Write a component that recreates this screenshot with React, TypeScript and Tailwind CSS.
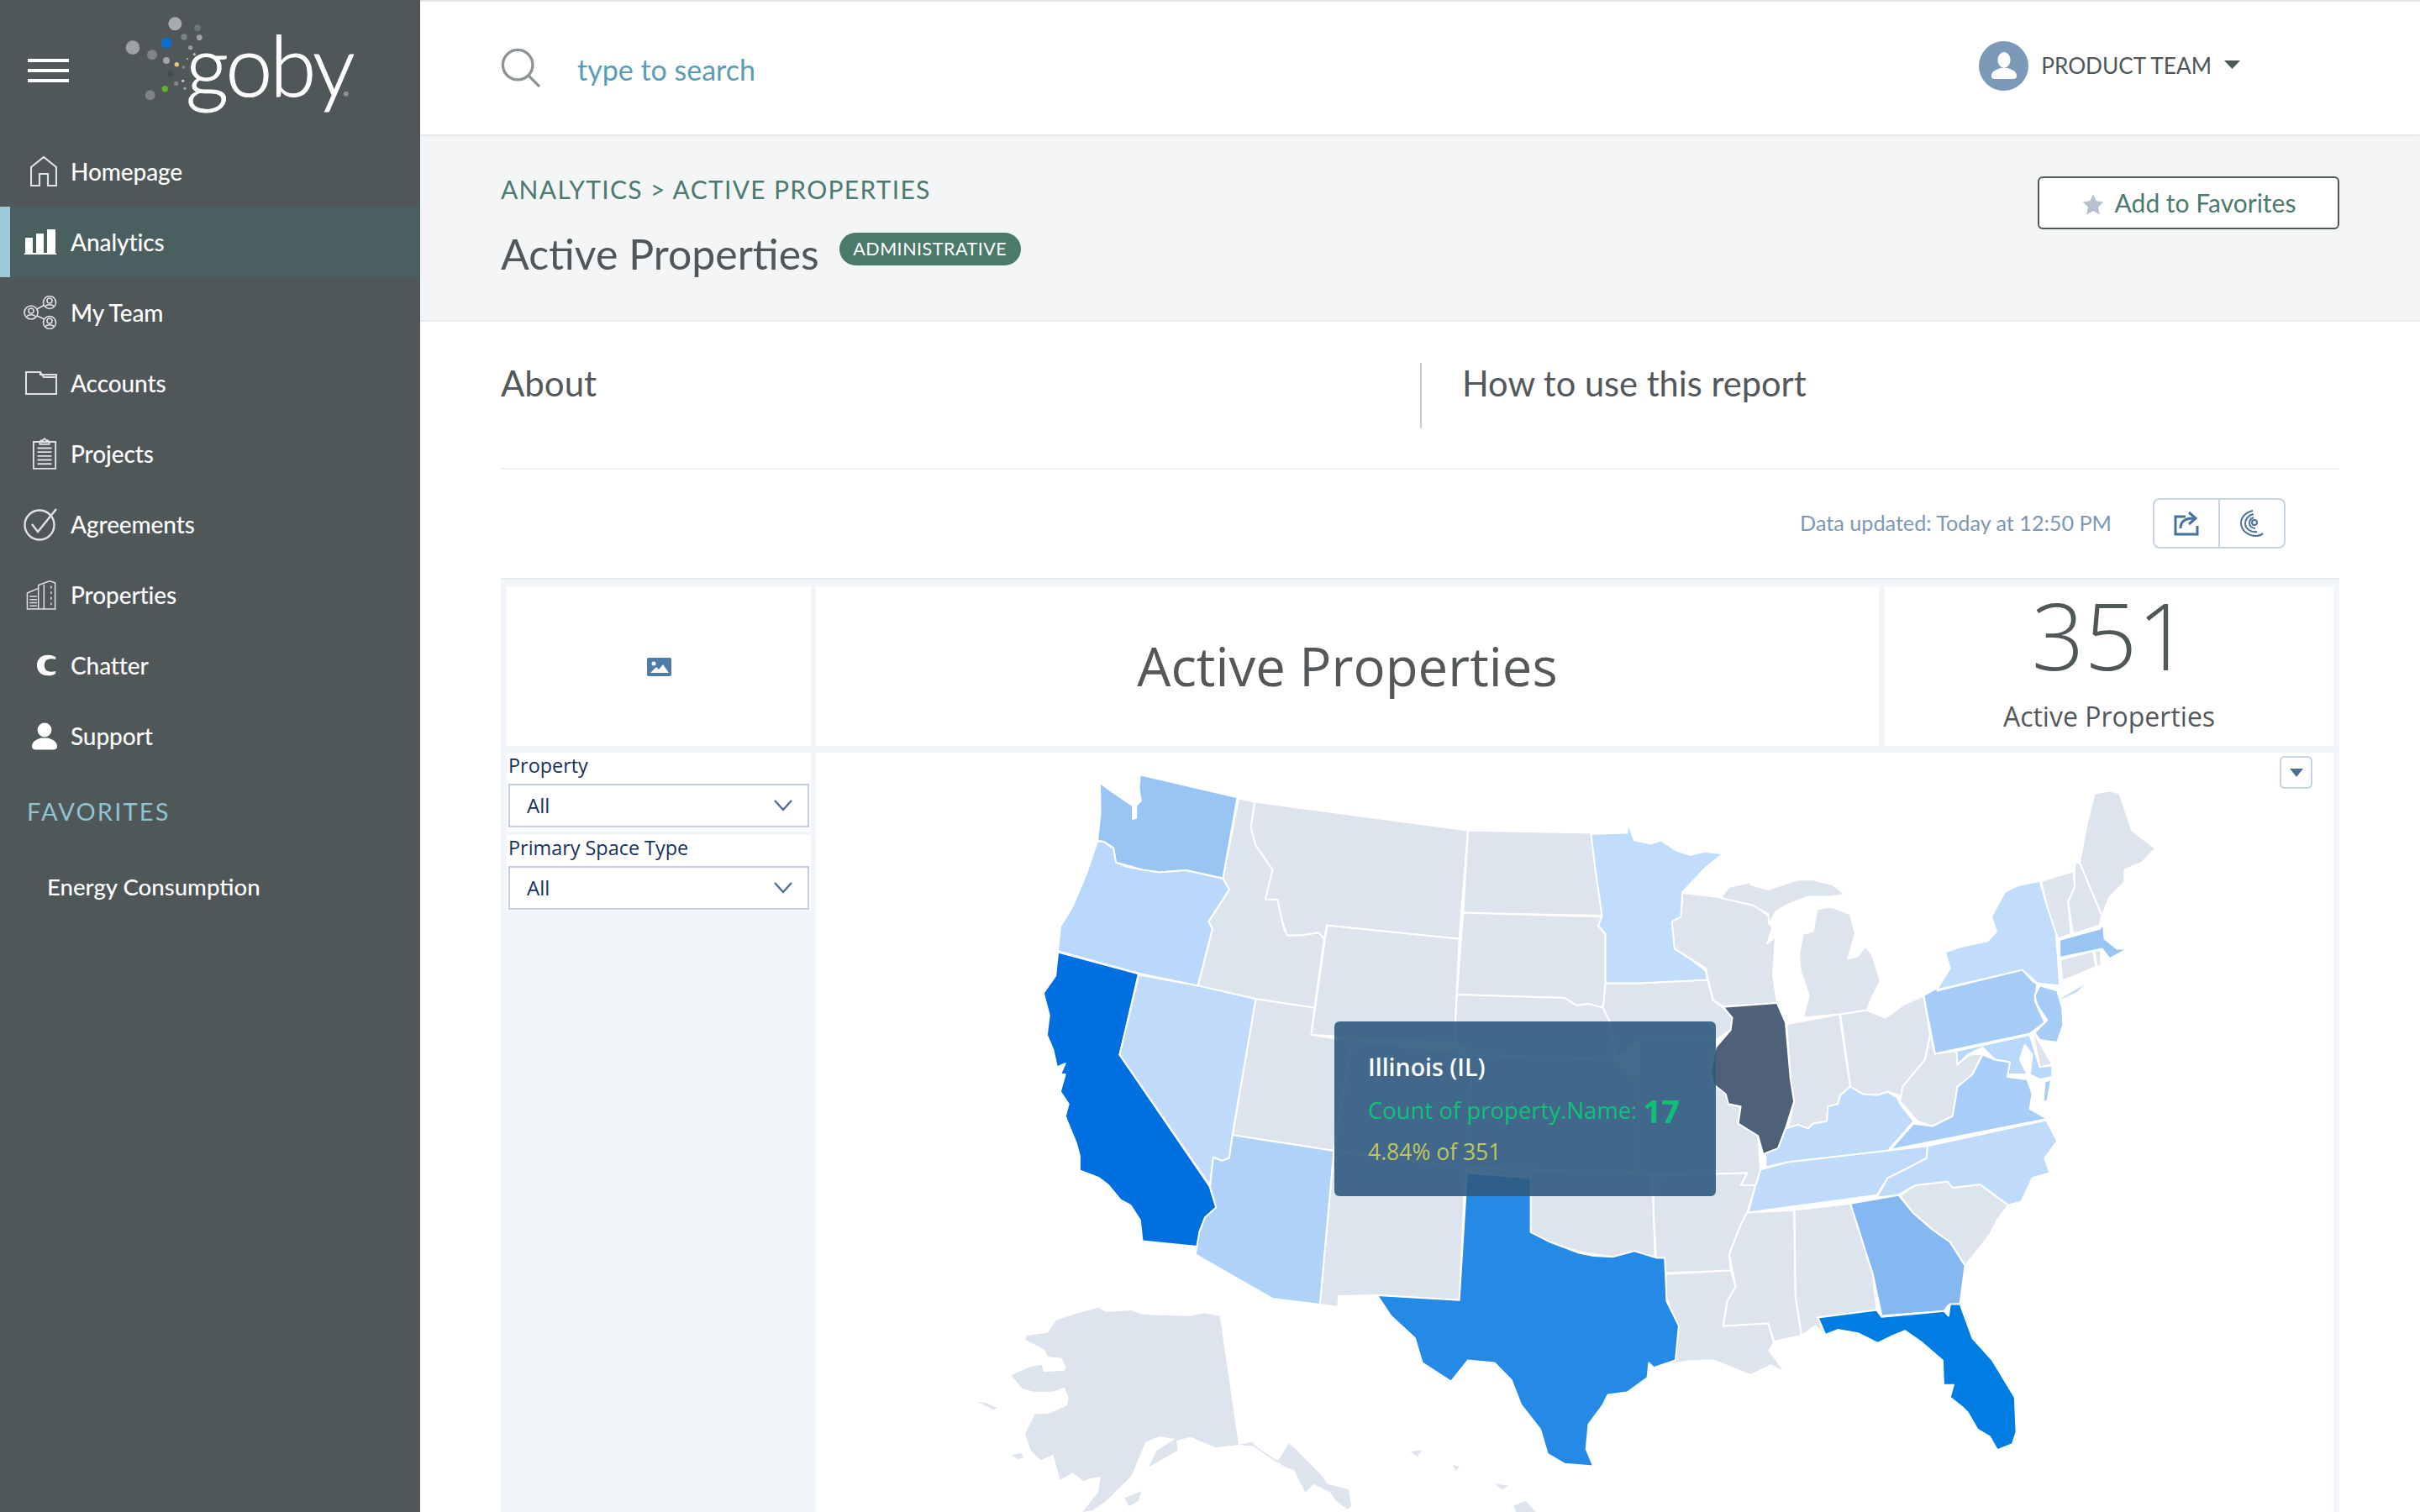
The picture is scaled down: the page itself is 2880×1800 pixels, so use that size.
import React from "react";

type Pt = [number, number];
const parse = (s: string, f: (x: number, y: number) => Pt) =>
  s.trim().split(/\s+/).map((t) => {
    const [x, y] = t.split(",").map(Number);
    return f(x, y).map((v) => v.toFixed(1)).join(",");
  }).join(" L");
const W = (s: string) => parse(s, (x, y) => [1150 + x / 1.742, 880 + y / 1.704]);
const E = (s: string) => parse(s, (x, y) => [1950 + x / 1.686, 880 + y / 1.704]);
const A = (s: string) => parse(s, (x, y) => [1150 + x / 3, 1500 + y / 3]);
const d = (...p: string[]) => "M" + p.join(" L") + "Z";

const G = "#dee4ee";
const states: [string, string][] = [
  // gray west
  [G, d(W("565,120 598,127 590,180 600,215 635,265 620,325 645,325 660,390 695,398 730,392 742,405 722,545 600,527 480,500 510,385 502,370 522,340 545,305 532,282"))],
  [G, d(W("598,127 1040,185 1022,405 748,378 742,405 730,392 695,398 665,398 655,370 645,325 620,325 635,265 600,215 590,180"))],
  [G, d(W("748,378 1022,405 1012,615 715,600"))],
  [G, d(W("600,527 722,545 715,600 800,612 762,835 552,803"))],
  [G, d(W("800,612 1050,640 1035,870 762,835"))],
  [G, d(W("762,835 1035,870 1022,1138 850,1128 772,1130 770,1152 733,1147"))],
  [G, d(W("1040,185 1295,190 1305,270 1318,358 1030,352"))],
  [G, d(W("1030,352 1318,360 1310,378 1325,395 1325,495 1325,520 1320,545 1290,537 1265,540 1240,525 1017,518"))],
  [G, d(W("1017,518 1240,525 1265,540 1290,537 1320,545 1335,575 1345,650 1050,640 1012,610"))],
  [G, d(W("1050,640 1345,650 1400,700 1425,880 1035,870"))],
  [G, d(W("1035,870 1422,880 1428,1050 1380,1040 1340,1050 1300,1045 1270,1040 1210,1020 1170,1000 1170,895"))],
  // gray central & east
  [G, d(W("1325,495"), E("0,495 138,488 150,530 170,545 188,565 185,590 155,610 0,610"), W("1345,650 1335,575 1320,545"))],
  [G, d(E("0,610 155,610 175,720 205,745 200,780 240,805 245,875 235,905 205,905 218,880 30,885 0,880"))],
  [G, d(E("30,885 218,880 205,905 235,905 218,960 205,985 182,1045 185,1078 55,1083 50,1055 35,1050 30,960"))],
  [G, d(E("55,1085 185,1078 195,1110 178,1140 170,1190 260,1183 272,1225 262,1240 295,1285 265,1270 225,1290 150,1260 100,1262 65,1268 80,1195 55,1130"))],
  [G, d(E("218,960 312,955 315,1130 327,1210 272,1222 260,1185 170,1190 178,1140 195,1110 182,1045 205,985"))],
  [G, d(E("313,955 425,942 470,1085 478,1158 360,1173 373,1208 355,1190 327,1210 315,1130"))],
  [G, d(E("88,312 160,320 235,338 262,360 268,385 258,415 275,400 270,480 278,535 170,542 150,530 140,490 135,465 72,425 67,370 85,358"))],
  [G, d(E("165,322 180,300 225,290 238,260 225,295 260,305 320,285 350,285 390,295 415,315 380,320 340,320 300,335 275,350 262,375 260,355 230,337"))],
  [G, d(E("330,565 342,520 325,470 322,435 330,395 350,390 358,345 385,340 425,355 435,395 420,445 440,440 455,420 470,440 485,490 470,520 458,550 403,558"))],
  [G, d(E("297,578 403,558 425,705 405,722 400,740 380,745 378,775 350,780 340,790 320,782 300,790 312,735 305,690"))],
  [G, d(E("405,558 458,550 495,565 530,540 572,520 585,600 575,650 550,680 530,725 500,715 480,722 450,720 425,705"))],
  [G, d(E("595,638 640,632 640,660 665,640 690,638 670,680 640,705 630,765 590,785 560,775 525,735 530,705 550,680 575,650 585,600"))],
  [G, d(E("525,925 555,905 620,897 630,910 685,903 742,945 720,975 705,1005 655,1068 625,1020 590,995 550,960"))],
  [G, d(E("808,288 872,268 875,300 862,330 868,395 842,405 820,345"))],
  [G, d(E("875,252 885,250 930,358 925,378 872,395 862,330 875,300"))],
  [G, d(E("885,250 900,170 915,110 945,105 965,110 990,185 1037,222 1010,250 975,265 975,290 945,320 930,358"))],
  [G, d(E("847,447 912,430 918,462 850,490"))],
  [G, d(E("915,430 928,428 928,458 920,462"))],
  [G, d(E("790,590 830,660 805,665"))],
  // coloured
  ["#99c5f5", d(W("360,72 562,118 532,282 455,266 400,270 365,265 330,255 310,250 305,220 285,208 272,205 278,150 277,88 300,105 330,125 345,135 345,162 352,160 352,135 362,125 358,100"))],
  ["#b9d8fb", d(W("272,207 285,208 305,222 310,250 330,258 365,265 400,270 455,266 532,283 545,305 522,340 502,370 510,385 480,500 357,475 190,430 195,380 220,340 250,270"))],
  ["#0070e0", d(W("190,432 357,476 318,640 505,908 510,925 518,950 495,970 483,1000 488,1030 365,1018 360,975 340,945 320,935 295,905 275,890 235,875 235,845 228,820 205,765 212,740 195,715 205,680 195,680 205,658 188,665 180,630 167,600 172,560 160,515 185,480"))],
  ["#bfdafa", d(W("358,478 480,500 600,527 552,800 545,850 530,855 512,848 505,905 318,640"))],
  ["#b0d2f8", d(W("552,803 762,835 733,1147 635,1135 475,1045 483,1000 495,970 518,950 505,908 512,848 530,855 545,850"))],
  ["#c2dcfb", d(W("1295,192 1370,190 1372,170 1385,205 1420,212 1440,205 1470,225 1500,235 1530,228"), E("170,232 135,260 88,310 85,360 67,370 72,425 110,450 135,470 138,488 0,495"), W("1325,495 1325,395 1310,378 1318,358 1305,270"))],
  ["#248ae6", d(W("1038,880 1170,890 1170,1000 1210,1020 1270,1042 1300,1048 1340,1050 1385,1038 1430,1052 1448,1052 1452,1140 1477,1190 1470,1260 1425,1275 1415,1265 1412,1295 1370,1325 1330,1330 1320,1350 1290,1390 1285,1440 1300,1475 1240,1470 1205,1450 1190,1400 1150,1350 1130,1300 1095,1265 1040,1260 1005,1303 945,1265 930,1215 880,1170 852,1128 1022,1138"))],
  ["#4f6179", d(E("170,543 278,535 295,575 305,690 312,735 295,790 280,830 250,842 240,805 200,780 205,745 180,740 175,720 150,700 145,670 155,625 185,590 188,565"))],
  ["#a5cbf7", d(E("572,520 598,505 600,510 770,468 790,490 800,497 795,530 815,575 785,597 595,638"))],
  ["#c2dcfb", d(E("600,505 625,465 615,432 650,420 700,410 718,390 708,360 735,310 760,297 805,288 820,340 838,395 845,500 800,495 770,468 600,508"))],
  ["#c2dcfb", d(E("845,525 905,490 880,515 850,528"))],
  ["#99c5f5", d(E("845,407 925,385 932,375 935,405 960,425 982,425 945,445 930,425 845,443"))],
  ["#a5cbf7", d(E("805,500 840,510 850,545 852,580 840,615 805,610 795,595 820,570 800,540 795,520"))],
  ["#b9d8fb", d(E("638,632 785,600 805,665 830,662 830,685 805,690 785,680 790,640 775,620 765,650 780,680 740,680 745,655 715,650 690,625 660,640 640,660"))],
  ["#a8cdf8", d(E("690,640 715,650 745,655 740,685 780,690 790,720 785,750 820,770 505,833 552,780 590,785 630,765 640,705 670,680"))],
  ["#a8cdf8", d(E("815,695 828,690 820,735 812,735"))],
  ["#bfdafa", d(E("425,705 450,720 480,722 500,715 520,728 525,740 552,775 500,835 300,858 255,868 255,840 280,830 295,790 320,782 340,790 350,780 378,775 380,745 400,740 405,722"))],
  ["#bfdafa", d(E("245,873 300,858 580,825 578,850 540,870 500,890 478,925 220,960 235,905"))],
  ["#bfdafa", d(E("580,825 818,773 840,815 815,850 825,880 790,890 768,938 742,945 685,903 630,910 620,897 555,905 520,925 478,930 500,890 540,870 578,850"))],
  ["#85b8f0", d(E("425,942 522,925 550,960 590,995 625,1020 655,1068 645,1145 622,1148 613,1160 488,1170 470,1085"))],
  ["#007de3", d(E("360,1173 478,1158 488,1172 613,1160 622,1170 625,1146 645,1146 670,1215 710,1260 755,1335 758,1405 750,1430 720,1442 705,1415 680,1400 660,1365 650,1355 625,1335 632,1310 612,1310 610,1260 570,1225 535,1200 510,1210 480,1225 440,1205 400,1198 375,1208"))],
];
const noStroke: string[] = [
  d(A("905,200 972,660 1020,650 1040,670 1100,710 1140,730 1105,720 1025,665 975,660 890,670 800,632 750,645 755,680 650,740 680,680 745,640 690,630 640,650 590,770 500,860 450,895 415,900 470,830 480,775 440,780 420,790 380,760 335,785 310,695 265,715 230,680 210,620 245,550 290,550 360,520 365,490 350,455 310,470 240,470 200,460 160,412 230,380 270,375 275,400 350,395 355,380 340,350 290,345 280,320 210,285 215,270 290,260 320,215 400,190 470,170 500,185 590,180 630,195 800,200 850,190")),
  d(A("1130,690 1150,655 1170,670 1270,770 1290,800 1365,820 1375,880 1360,890 1320,860 1300,830 1240,800 1210,830 1170,750 1140,740 1110,720")),
  d(A("35,508 70,510 110,528 95,535 60,515")),
  d(A("160,697 195,690 205,705 185,712")),
  d(A("565,850 625,825 615,860 580,880")),
  d(W("920,1445 945,1442 935,1455")),
  d(W("1008,1472 1022,1475 1015,1485")),
  d(W("1095,1510 1125,1515 1110,1522")),
  d(W("1135,1555 1160,1545 1180,1568 1140,1568")),
];

const dots: [number, number, number, string][] = [
  [625, 85, 24, "#a9acae"], [705, 100, 12, "#6f7678"], [712, 134, 10, "#a0a4a6"], [657, 132, 11, "#7b8183"],
  [594, 153, 19, "#0b6fcf"], [474, 170, 25, "#9ea2a4"], [543, 196, 18, "#7f8486"], [680, 170, 8, "#999c9e"],
  [694, 194, 5, "#bbbdbe"], [594, 216, 12, "#a0a4a6"], [631, 230, 8, "#e5cf6c"], [669, 210, 4, "#9a9d9f"],
  [655, 240, 5, "#8e9294"], [610, 263, 11, "#454c4e"], [653, 289, 5, "#cccccc"], [629, 298, 8, "#7f8486"],
  [589, 317, 11, "#5fb42a"], [660, 316, 5, "#a5a8a9"], [536, 340, 18, "#7d8284"], [1235, 335, 9, "#8a8f91"],
];

const ic = { fill: "none", stroke: "#dfe2e2", strokeWidth: 2 };
const icons: Record<string, React.ReactNode> = {
  home: <svg width="32" height="36" viewBox="0 0 32 36" {...ic}><path d="M1 35V13L16 1l15 12v22H21V21H11v14z" strokeWidth="2.2" /></svg>,
  bars: <svg width="40" height="30" viewBox="0 0 40 30"><path d="M0 30l2-2V10h9v18h4V5h9v23h4V0h10v28l2 2z" fill="#fff" /></svg>,
  team: <svg width="40" height="40" viewBox="0 0 40 40" {...ic} strokeWidth="1.6"><circle cx="9" cy="20" r="8" /><circle cx="31" cy="8" r="7.5" /><circle cx="31" cy="32" r="7.5" /><path d="M16 16l9-5M16 24l9 4" /><circle cx="9" cy="18" r="3" /><path d="M4 25c1-3 9-3 10 0" /><circle cx="31" cy="6" r="3" /><path d="M26 13c1-3 9-3 10 0" /><circle cx="31" cy="30" r="3" /><path d="M26 37c1-3 9-3 10 0" /></svg>,
  folder: <svg width="38" height="28" viewBox="0 0 38 28" {...ic}><path d="M1 1h17l4 6h15v20H1zM18 1v3h19v3" /></svg>,
  clip: <svg width="30" height="40" viewBox="0 0 32 40" {...ic}><path d="M2 5h28v34H2zM10 5l2-2h2l2-2 2 2h2l2 2v3H10zM7 13h18M7 18h18M7 23h18M7 28h18M7 33h18" /></svg>,
  agree: <svg width="40" height="40" viewBox="0 0 40 40" {...ic} strokeWidth="2.4"><circle cx="19" cy="21" r="17.5" /><path d="M10 20l7 9L39 2" /></svg>,
  prop: <svg width="37" height="36" viewBox="0 0 38 38" {...ic} strokeWidth="1.6"><path d="M1 37V17l14-6v26zM15 37V7l14-5 7 2v33zM1 37h36M4 21h9M4 25h9M4 29h9M4 33h9M31 8v3M31 15v3M31 22v3M31 29v3M22 6v31" /></svg>,
  chat: <svg width="24" height="26" viewBox="0 0 26 28"><path d="M24 3.5C20 0 13 0 7 2 2 5 0 9 0 14s2 9 7 12c6 2 13 2 17-1.500v-3c-5 1.500-11 1-13-2-2-3-2-8 0-11 2-3 8-3.500 13-2z" fill="#fff" /></svg>,
  user: <svg width="30" height="35" viewBox="0 0 32 36"><circle cx="16" cy="10" r="9" fill="#fff" /><path d="M0 31c0-8 8-9 11-11h10c3 2 11 3 11 11 0 3-3 4-5 4H5c-2 0-5-1-5-4z" fill="#fff" /></svg>,
};

const nav: [string, string, boolean?][] = [
  ["home", "Homepage"], ["bars", "Analytics", true], ["team", "My Team"], ["folder", "Accounts"],
  ["clip", "Projects"], ["agree", "Agreements"], ["prop", "Properties"], ["chat", "Chatter"], ["user", "Support"],
];

function Sidebar() {
  return (
    <aside className="w-[500px] shrink-0 bg-[#4f5759] text-white font-['Lato',sans-serif]">
      <div className="relative h-[162px] flex items-start">
        <div className="ml-[33px] mt-[70px] w-[49px] flex flex-col gap-[8px]">
          <div className="h-[4px] bg-white" /><div className="h-[4px] bg-white" /><div className="h-[4px] bg-white" />
        </div>
        <svg className="absolute left-0 top-0" width="500" height="162" viewBox="0 0 1500 486">
          {dots.map(([x, y, r, c], i) => <circle key={i} cx={x} cy={y} r={r} fill={c} />)}
        </svg>
        <span className="absolute left-[221px] top-[16px] text-[100px] leading-[120px] font-light tracking-[-3px] [-webkit-text-stroke:1px_white]">goby</span>
      </div>
      {nav.map(([icon, label, active]) => (
        <div key={label} className={`relative h-[84px] flex items-center ${active ? "bg-[#4c5f60]" : ""}`}>
          {active && <div className="absolute left-0 top-0 bottom-0 w-[12px] bg-[#9cc9d8]" />}
          <div className="ml-[20px] w-[48px] h-[40px] flex items-center justify-end shrink-0">{icons[icon]}</div>
          <span className="ml-[16px] text-[28px] tracking-[-0.1px] font-medium">{label}</span>
        </div>
      ))}
      <div className="ml-[32px] mt-[24px] text-[29px] leading-[48px] tracking-[2.2px] text-[#8fc3d3]">FAVORITES</div>
      <div className="ml-[56px] mt-[48px] text-[27.6px] leading-[36px] font-medium">Energy Consumption</div>
    </aside>
  );
}

function Select({ label, cls }: { label: string; cls: string }) {
  return (
    <div className={`bg-white px-[2px] ${cls}`}>
      <div className="text-[23.4px] leading-[30px] text-[#16325c] h-[37px]">{label}</div>
      <div className="h-[52px] border-2 border-[#c3cfdc] bg-white flex items-center justify-between pl-[20px] pr-[18px] text-[24px] text-[#16325c]">
        <span>All</span>
        <svg width="22" height="14" viewBox="0 0 22 14" fill="none" stroke="#4f6f95" strokeWidth="2.4"><path d="M1 1l10 11L21 1" /></svg>
      </div>
    </div>
  );
}

export default function App() {
  return (
    <div className="flex w-[2880px] h-[1800px] overflow-hidden bg-white font-['Lato',sans-serif]">
      <Sidebar />
      <main className="flex-1 flex flex-col min-w-0">
        <header className="h-[160px] shrink-0 border-t-2 border-[#e4e4e4] flex items-center pl-[96px] shadow-[0_1px_3px_rgba(0,0,0,0.1)] relative">
          <svg width="48" height="48" viewBox="0 0 50 50" fill="none" stroke="#8d9396" strokeWidth="3.5"><circle cx="21" cy="21" r="18.500" /><path d="M34 34l14 14" /></svg>
          <span className="ml-[43px] mt-[2px] text-[34px] text-[#5b9db5]">type to search</span>
          <div className="ml-auto mr-[214px] -mt-[5px] flex items-center">
            <div className="w-[59px] h-[59px] rounded-full bg-[#7c99b7] flex items-center justify-center">
              <svg width="32" height="34" viewBox="0 0 32 36"><ellipse cx="16" cy="10" rx="8" ry="10" fill="#fff" /><path d="M0 30c0-7 8-8 11-10h10c3 2 11 3 11 10 0 3-2 4-4 4H4c-2 0-4-1-4-4z" fill="#fff" /></svg>
            </div>
            <span className="ml-[15px] text-[26.2px] text-[#4f5759]">PRODUCT TEAM</span>
            <svg className="ml-[15px] -mt-[3px]" width="19" height="10" viewBox="0 0 19 10"><path d="M0 0h19l-9.500 10z" fill="#4f5759" /></svg>
          </div>
        </header>
        <section className="h-[223px] shrink-0 bg-[#f4f5f7] border-b-2 border-[#e9ebee] pl-[96px] pr-[96px] flex justify-between">
          <div>
            <div className="mt-[47px] text-[30px] leading-[36px] tracking-[1.3px] text-[#4c7a6f]">ANALYTICS &gt; ACTIVE PROPERTIES</div>
            <div className="mt-[29px] flex items-center">
              <h1 className="text-[50px] leading-[60px] text-[#4f5759]">Active Properties</h1>
              <span className="ml-[24px] -mt-[12px] h-[39px] w-[216px] rounded-full bg-[#4c7a6a] text-white text-[21.500px] tracking-[0.5px] flex items-center justify-center">ADMINISTRATIVE</span>
            </div>
          </div>
          <button className="mt-[50px] h-[63px] w-[359px] bg-white border-2 border-[#4f5759] rounded-[6px] flex items-center justify-center text-[30px] text-[#4c7a6f]">
            <svg className="mr-[12px] mt-[4px]" width="28" height="27" viewBox="0 0 24 24"><path d="M12 1l3.400 7.300 7.600 1-5.600 5.300 1.500 8L12 18.700 5.100 22.600l1.500-8L1 9.300l7.600-1z" fill="#b5c1d1" /></svg>
            Add to Favorites
          </button>
        </section>
        <div className="mx-[96px] h-[176px] shrink-0 border-b-2 border-[#f0f1f3] flex pt-[49px]">
          <div className="w-[1096px] h-[78px] border-r-2 border-[#c9cdcf] text-[42px] leading-[48px] text-[#54585b]">About</div>
          <div className="ml-[48px] text-[41.600px] leading-[48px] text-[#54585b]">How to use this report</div>
        </div>
        <div className="mx-[96px] h-[129px] shrink-0 flex items-start justify-end pr-[64px] pt-[34px]">
          <span className="mt-[13px] text-[25.200px] leading-[32px] text-[#7c98b6]">Data updated: Today at 12:50 PM</span>
          <div className="ml-[49px] h-[60px] w-[158px] border-2 border-[#c5d3e2] rounded-[8px] flex">
            <div className="w-[78px] border-r-2 border-[#c5d3e2] flex items-center justify-center">
              <svg width="30" height="30" viewBox="0 0 30 30" fill="none" stroke="#48709c" strokeWidth="3"><path d="M14 7H2v21h26V18M8 21c0-8 5-12 15-12M18 2l8 7-8 7" /></svg>
            </div>
            <div className="flex-1 flex items-center justify-center">
              <svg width="30" height="32" viewBox="0 0 30 32" fill="none" stroke="#48709c" strokeWidth="2"><path d="M16 1C7 3 2 9 2 16c0 8 8 15 18 15 3 0 6-1 8-3" /><path d="M17 5c-6 1-10 6-10 11 0 7 7 11 14 10" /><path d="M17 9c-3 1-5 4-5 7 0 3 3 6 7 6" /><circle cx="18" cy="15" r="3" /></svg>
            </div>
          </div>
        </div>
        <div className="mx-[96px] flex-1 bg-[#f2f6fb] border-t-2 border-[#e6edf5] flex flex-col px-[7px] pt-[9px] min-h-0 font-['Open_Sans',sans-serif]">
          <div className="flex gap-[6px] h-[189px] shrink-0">
            <div className="w-[362px] bg-white flex items-center justify-center">
              <svg width="29" height="22" viewBox="0 0 29 22"><rect width="29" height="22" rx="2" fill="#4f7ba8" /><circle cx="8" cy="7" r="2.500" fill="#fff" /><path d="M4 18l7-7 3 3 5-6 7 10z" fill="#fff" /></svg>
            </div>
            <div className="flex-1 bg-white flex items-center justify-center pb-[2px] text-[63.500px] text-[#54585b]">Active Properties</div>
            <div className="w-[534px] ml-[1px] bg-white flex flex-col items-center text-[#4f5759]">
              <div className="text-[110px] leading-[116px] -mt-[2px] ml-[4px] font-light">351</div>
              <div className="mt-[20px] text-[32px] leading-[40px] text-[#54585b]">Active Properties</div>
            </div>
          </div>
          <div className="flex gap-[6px] mt-[8px] flex-1 min-h-0">
            <div className="w-[362px] shrink-0">
              <Select label="Property" cls="h-[94px] mb-[4px]" />
              <Select label="Primary Space Type" cls="h-[90px]" />
            </div>
            <div className="flex-1 bg-white relative overflow-hidden">
              <svg className="block" width="1806" height="904" viewBox="971 896 1806 904">
                {noStroke.map((p, i) => <path key={i} d={p} fill={G} />)}
                {states.map(([c, p], i) => <path key={i} d={p} fill={c} stroke="#fff" strokeWidth="2" strokeLinejoin="round" />)}
              </svg>
              <div className="absolute left-[617px] top-[320px] w-[454px] h-[208px] rounded-[6px] bg-[#305a7f]/90 pl-[40px] pt-[36px]">
                <div className="text-[28.500px] leading-[36px] font-semibold text-white">Illinois (IL)</div>
                <div className="mt-[12px] h-[44px] flex items-center text-[27.500px] text-[#0fc07a]">Count of property.Name:<span className="ml-[7px] text-[38px] font-bold">17</span></div>
                <div className="mt-[11px] text-[26.500px] leading-[32px] text-[#c0c75a]">4.84% of 351</div>
              </div>
              <div className="absolute left-[1742px] top-[4px] w-[39px] h-[39px] rounded-[6px] bg-white border-2 border-[#c5d3e2] flex items-center justify-center">
                <svg width="16" height="10" viewBox="0 0 16 10"><path d="M0 0h16l-8 10z" fill="#4f6f95" /></svg>
              </div>
            </div>
          </div>
        </div>
      </main>
    </div>
  );
}
